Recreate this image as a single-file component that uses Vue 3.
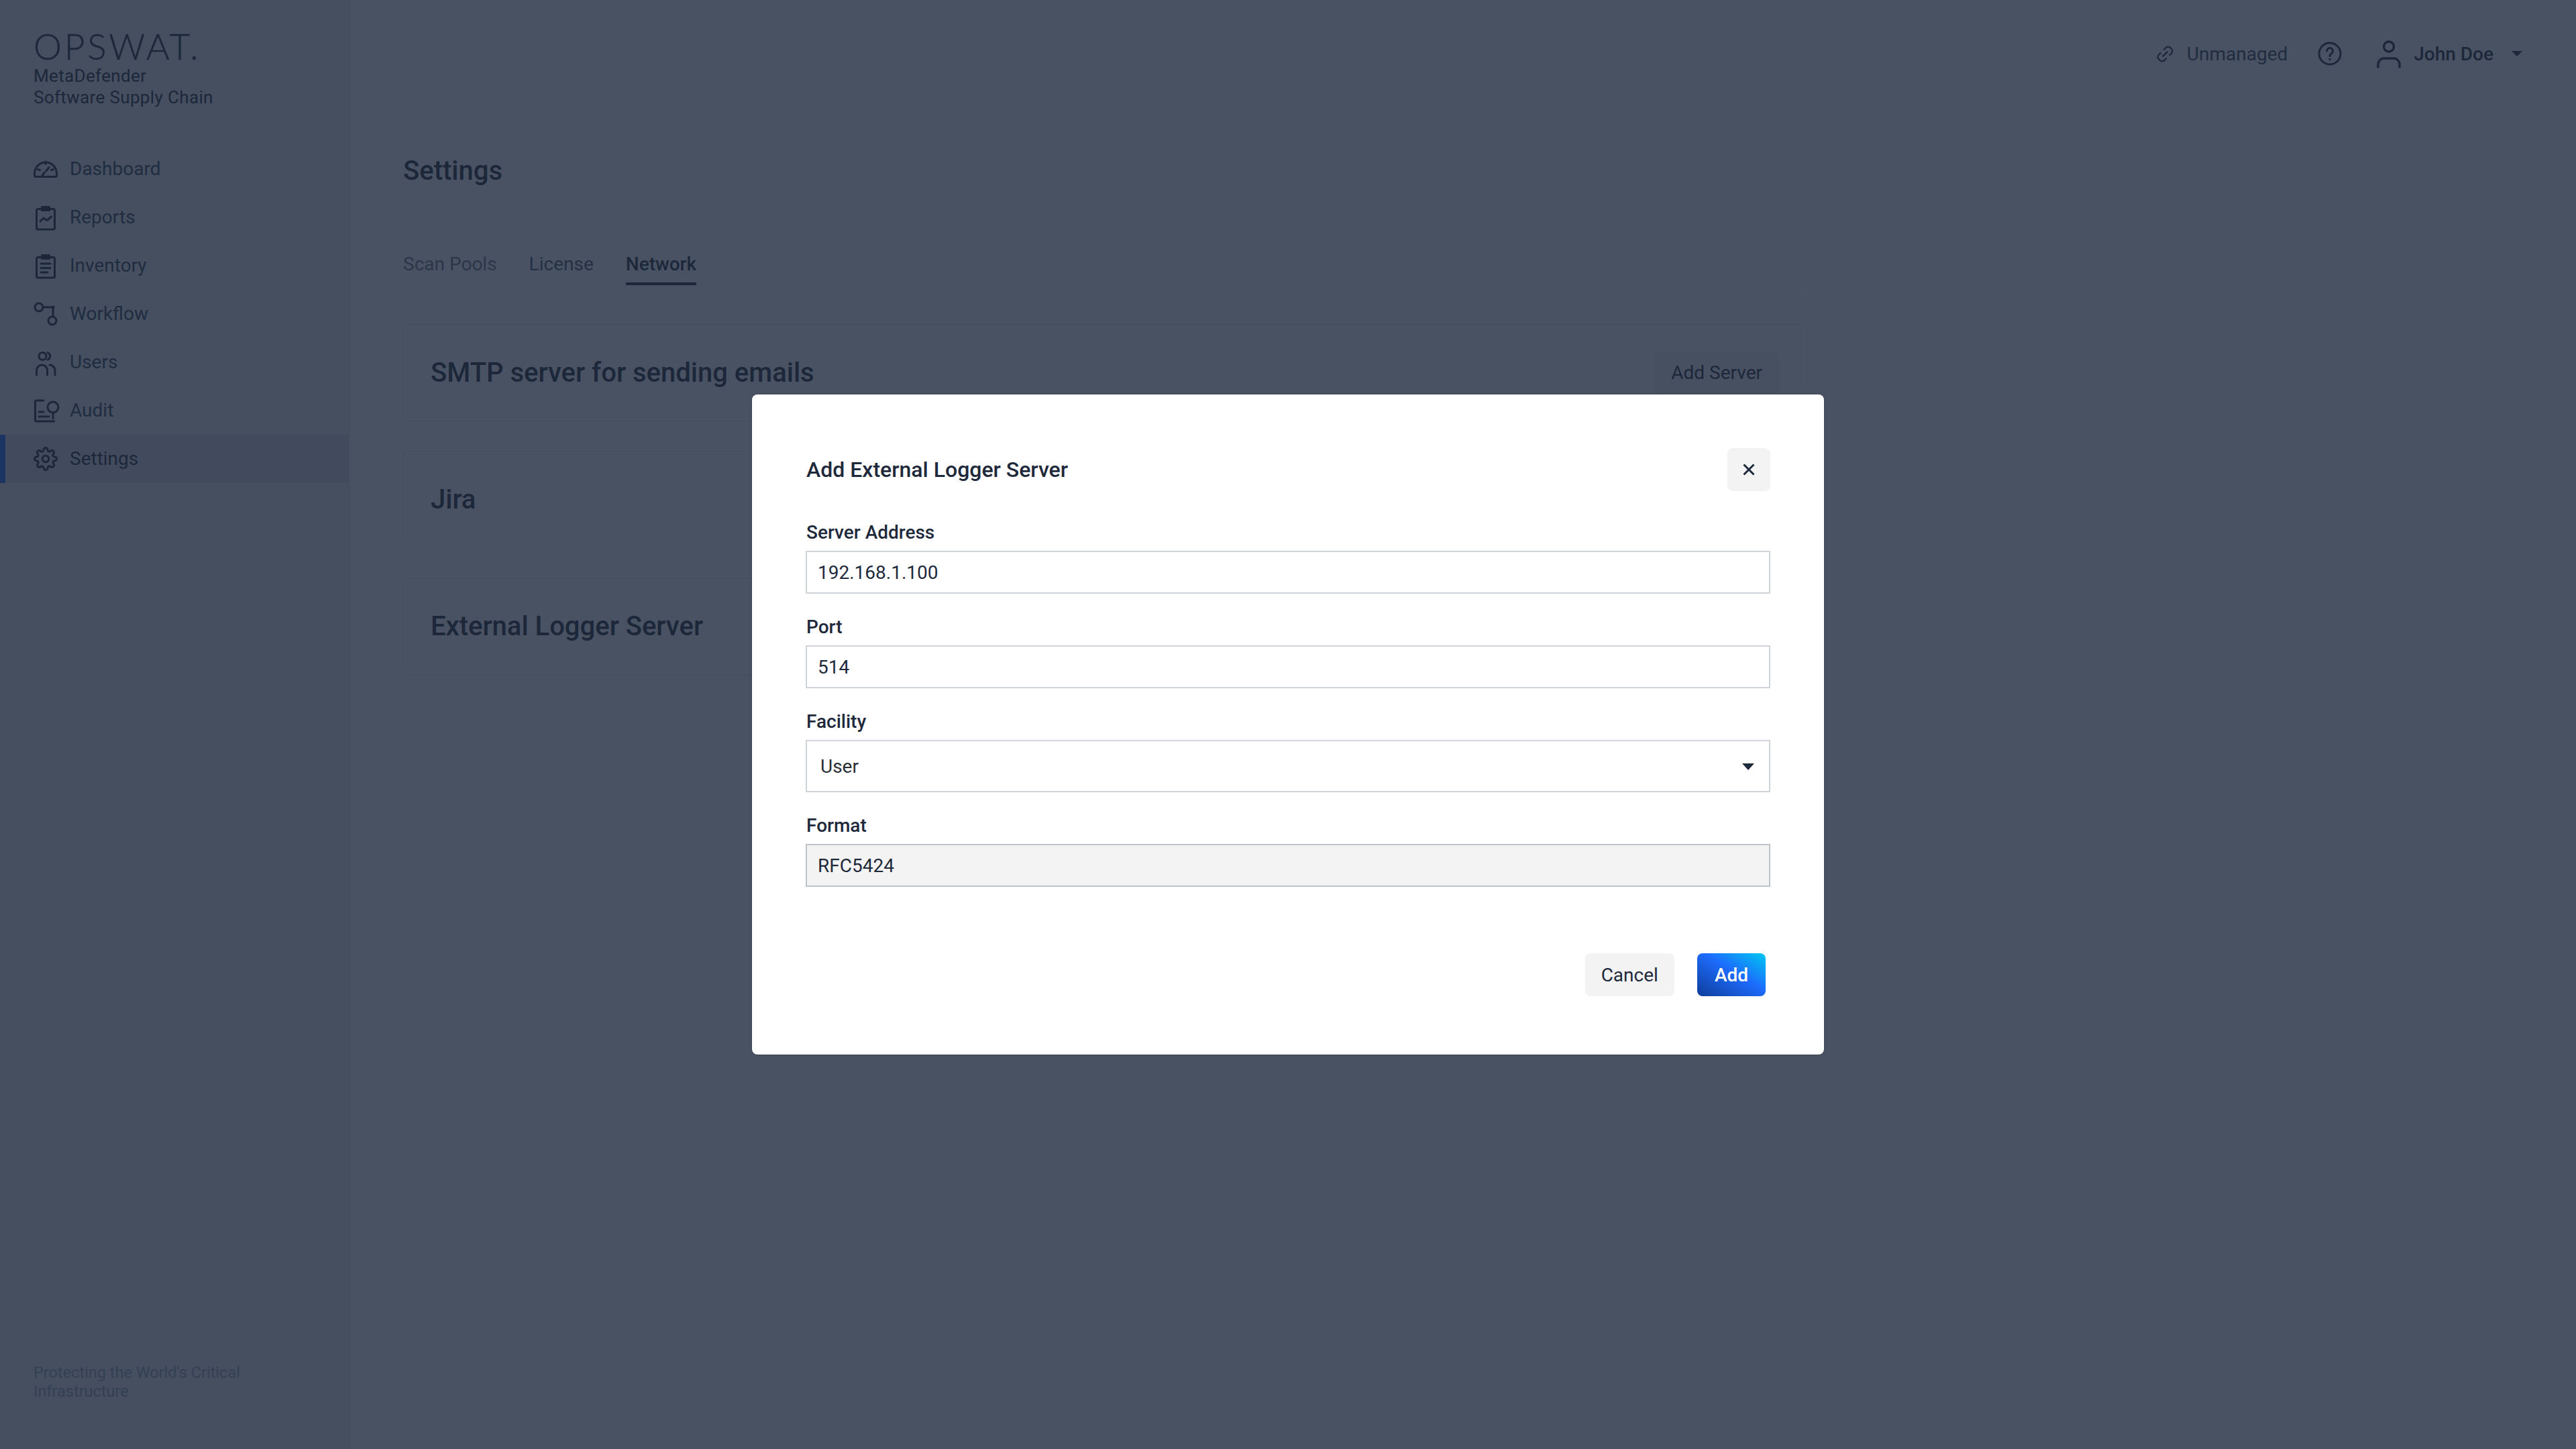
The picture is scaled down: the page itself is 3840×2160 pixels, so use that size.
<script setup>
const nav = [
  { label: 'Dashboard', paths: ['M3 29.5h30a1.5 1.5 0 0 0 1.5-1.5v-3.5A16.5 16.5 0 0 0 1.5 24.5V28A1.5 1.5 0 0 0 3 29.5z', 'M18 7v3.5', 'M6.5 18.5l3 1.2', 'M29.5 18.5l-3 1.2', 'M12.5 28.5l4-5.5', 'M19 20.5l4-5'] },
  { label: 'Reports', paths: ['M11 5.5H7a2.5 2.5 0 0 0-2.5 2.5v26a2 2 0 0 0 2 2h23a2 2 0 0 0 2-2V8a2.5 2.5 0 0 0-2.5-2.5h-4', 'M10 24l5-5 5 3.5 6.5-5.5'], fills: ['M11 3a2 2 0 0 1 2-2h10a2 2 0 0 1 2 2v6H11z'] },
  { label: 'Inventory', paths: ['M11 5.5H7a2.5 2.5 0 0 0-2.5 2.5v26a2 2 0 0 0 2 2h23a2 2 0 0 0 2-2V8a2.5 2.5 0 0 0-2.5-2.5h-4', 'M11 15h14', 'M11 21.5h14', 'M11 28h10'], fills: ['M11 3a2 2 0 0 1 2-2h10a2 2 0 0 1 2 2v6H11z'] },
  { label: 'Workflow', paths: ['M14 8a6 6 0 1 1-12 0a6 6 0 0 1 12 0z', 'M14 8h15', 'M29 8v14', 'M34 28a6 6 0 1 1-12 0a6 6 0 0 1 12 0z'], fills: ['M26.5 8a2.5 2.5 0 1 0 5 0a2.5 2.5 0 0 0-5 0z'] },
  { label: 'Users', paths: ['M19 9a5.5 5.5 0 1 1-11 0a5.5 5.5 0 0 1 11 0z', 'M21 3.8a5.5 5.5 0 0 1 0 10.4', 'M4.5 37v-7a8 8 0 0 1 16 0v7', 'M24 22a8 8 0 0 1 8 8v7'] },
  { label: 'Audit', paths: ['M15 3H4a1.5 1.5 0 0 0-1.5 1.5v28A1.5 1.5 0 0 0 4 34h26.5', 'M37 13a8 8 0 1 1-16 0a8 8 0 0 1 16 0z', 'M29 21v9', 'M8 20h7', 'M8 27h15'] },
  { label: 'Settings', active: true, gear: true }
]
const tabs = [
  { label: 'Scan Pools', tone: 'muted' },
  { label: 'License', tone: 'soft' },
  { label: 'Network', tone: 'active' }
]
const cards = [
  { title: 'SMTP server for sending emails', action: 'Add Server' },
  { title: 'Jira' },
  { title: 'External Logger Server' }
]
</script>

<template>
  <div class="page">
    <aside class="sidebar">
      <div class="brand">
        <div class="logo">OPSWAT.</div>
        <div class="product">MetaDefender<br />Software Supply Chain</div>
      </div>
      <nav class="nav">
        <a v-for="item in nav" :key="item.label" class="nav-item" :class="{ active: item.active }">
          <svg v-if="item.gear" class="nav-icon" viewBox="0 0 24 24" fill="none" stroke="currentColor" stroke-width="2">
            <circle cx="12" cy="12" r="3.2" />
            <path d="M19.4 15a1.65 1.65 0 0 0 .33 1.82l.06.06a2 2 0 0 1 0 2.83 2 2 0 0 1-2.83 0l-.06-.06a1.65 1.65 0 0 0-1.82-.33 1.65 1.65 0 0 0-1 1.51V21a2 2 0 0 1-2 2 2 2 0 0 1-2-2v-.09A1.65 1.65 0 0 0 9 19.4a1.65 1.65 0 0 0-1.82.33l-.06.06a2 2 0 0 1-2.83 0 2 2 0 0 1 0-2.83l.06-.06a1.65 1.65 0 0 0 .33-1.82 1.65 1.65 0 0 0-1.51-1H3a2 2 0 0 1-2-2 2 2 0 0 1 2-2h.09A1.65 1.65 0 0 0 4.6 9a1.65 1.65 0 0 0-.33-1.82l-.06-.06a2 2 0 0 1 0-2.83 2 2 0 0 1 2.83 0l.06.06a1.65 1.65 0 0 0 1.82.33H9a1.65 1.65 0 0 0 1-1.51V3a2 2 0 0 1 2-2 2 2 0 0 1 2 2v.09a1.65 1.65 0 0 0 1 1.51 1.65 1.65 0 0 0 1.82-.33l.06-.06a2 2 0 0 1 2.83 0 2 2 0 0 1 0 2.83l-.06.06a1.65 1.65 0 0 0-.33 1.82V9a1.65 1.65 0 0 0 1.51 1H21a2 2 0 0 1 2 2 2 2 0 0 1-2 2h-.09a1.65 1.65 0 0 0-1.51 1z" />
          </svg>
          <svg v-else class="nav-icon" viewBox="0 0 36 36" fill="none" stroke="currentColor" stroke-width="3" stroke-linecap="round" stroke-linejoin="round">
            <path v-for="d in item.paths" :key="d" :d="d" />
            <path v-for="d in item.fills || []" :key="d" :d="d" fill="currentColor" stroke="none" />
          </svg>
          <span class="nav-label">{{ item.label }}</span>
        </a>
      </nav>
      <p class="tagline">Protecting the World's Critical Infrastructure</p>
    </aside>

    <div class="main">
      <header class="topbar">
        <div class="status">
          <svg class="link-icon" viewBox="0 0 24 24" fill="none" stroke="currentColor" stroke-width="2.2" stroke-linecap="round">
            <path d="M10.5 5.5l2.5-2.5a4.6 4.6 0 0 1 6.5 0l1.5 1.5a4.6 4.6 0 0 1 0 6.5l-2.5 2.5" />
            <path d="M13.5 18.5l-2.5 2.5a4.6 4.6 0 0 1-6.5 0l-1.5-1.5a4.6 4.6 0 0 1 0-6.5l2.5-2.5" />
            <path d="M9 15l6-6" />
          </svg>
          <span>Unmanaged</span>
        </div>
        <svg class="help-icon" viewBox="0 0 36 36" fill="none" stroke="currentColor" stroke-width="3" stroke-linecap="round">
          <circle cx="18" cy="18" r="16" />
          <path d="M13.5 14a4.5 4.5 0 1 1 7 3.8c-1.6 1-2.5 1.9-2.5 3.7" />
          <circle cx="18" cy="26.5" r="1.8" fill="currentColor" stroke="none" />
        </svg>
        <div class="user">
          <svg class="user-icon" viewBox="0 0 36 40" fill="none" stroke="currentColor" stroke-width="3.4" stroke-linecap="round">
            <circle cx="18" cy="9.5" r="7.5" />
            <path d="M2 40v-4a9 9 0 0 1 9-9h14a9 9 0 0 1 9 9v4" />
          </svg>
          <span class="user-name">John Doe</span>
          <span class="user-caret"></span>
        </div>
      </header>

      <main class="content">
        <h1 class="title">Settings</h1>
        <div class="tabs">
          <span v-for="tab in tabs" :key="tab.label" class="tab" :class="tab.tone">{{ tab.label }}</span>
        </div>
        <section v-for="card in cards" :key="card.title" class="card">
          <h2 class="card-title">{{ card.title }}</h2>
          <span v-if="card.action" class="ghost-btn">{{ card.action }}</span>
        </section>
      </main>
    </div>

    <div class="overlay">
      <div class="modal" role="dialog">
        <div class="modal-head">
          <h3 class="modal-title">Add External Logger Server</h3>
          <button class="close" type="button" aria-label="Close">
            <svg viewBox="0 0 18 18" fill="none" stroke="currentColor" stroke-width="3">
              <path d="M1.5 1.5l15 15M16.5 1.5l-15 15" />
            </svg>
          </button>
        </div>
        <div class="field">
          <label class="label">Server Address</label>
          <div class="input">192.168.1.100</div>
        </div>
        <div class="field">
          <label class="label">Port</label>
          <div class="input">514</div>
        </div>
        <div class="field">
          <label class="label">Facility</label>
          <div class="select">
            <span>User</span>
            <span class="select-caret"></span>
          </div>
        </div>
        <div class="field">
          <label class="label">Format</label>
          <div class="input disabled">RFC5424</div>
        </div>
        <div class="actions">
          <button class="btn cancel" type="button">Cancel</button>
          <button class="btn primary" type="button">Add</button>
        </div>
      </div>
    </div>
  </div>
</template>

<style>
html, body { margin: 0; padding: 0; background: #fff; }
</style>

<style scoped>
* { box-sizing: border-box; }
.page {
  position: relative;
  display: flex;
  width: 3840px;
  height: 2160px;
  overflow: hidden;
  background: #fff;
  color: #1e293b;
  font-family: Roboto, "Liberation Sans", sans-serif;
  font-size: 28px;
}
.sidebar {
  display: flex;
  flex-direction: column;
  width: 521px;
  flex: none;
  background: #ebeef1;
  border-right: 1px solid #e4e7ea;
}
.brand { padding: 40px 50px 0; height: 216px; }
.logo {
  height: 58px;
  font-family: Lato, Roboto, sans-serif;
  font-weight: 300;
  font-size: 53px;
  line-height: 58px;
  letter-spacing: 3.8px;
  white-space: nowrap;
  color: #1e293b;
  -webkit-text-stroke: .5px #1e293b;
}
.product {
  margin-top: -1px;
  font-size: 26px;
  line-height: 32px;
  letter-spacing: .35px;
  color: #1e293b;
}
.nav { display: flex; flex-direction: column; }
.nav-item {
  display: flex;
  align-items: center;
  gap: 18px;
  height: 72px;
  width: 520px;
  padding-left: 50px;
  color: #334155;
}
.nav-label { margin-bottom: 2px; }
.nav-item.active {
  background: #d9dde3;
  box-shadow: inset 8px 0 0 #1d6bfc;
  color: #1e293b;
}
.nav-icon { width: 36px; height: 36px; flex: none; overflow: visible; color: #1e293b; }
.tagline {
  margin: auto 0 72px;
  padding: 0 50px;
  width: 470px;
  font-size: 23.5px;
  line-height: 28px;
  color: #94a3b8;
}
.main { flex: 1; min-width: 0; }
.topbar {
  display: flex;
  align-items: center;
  justify-content: flex-end;
  height: 160px;
  padding: 0 80px;
}
.status { display: flex; align-items: center; gap: 20px; color: #334155; }
.link-icon { width: 25px; height: 25px; color: #1e293b; }
.help-icon { width: 36px; height: 36px; margin-left: 45px; color: #1e293b; }
.user { display: flex; align-items: center; margin-left: 52px; }
.user-icon { width: 36px; height: 40px; overflow: visible; color: #1e293b; }
.user-name { margin-left: 19px; font-weight: 500; }
.user-caret {
  margin-left: 27px;
  border-left: 8px solid transparent;
  border-right: 8px solid transparent;
  border-top: 8px solid #1e293b;
}
.content { padding: 71px 0 0 80px; width: 2172px; }
.title { margin: 0; font-size: 40px; line-height: 48px; font-weight: 500; }
.tabs {
  display: flex;
  gap: 48px;
  margin-top: 97px;
  margin-bottom: 57px;
  border-bottom: 1px solid #e8eaed;
}
.tab { height: 49px; line-height: 36px; }
.tab.muted { color: #6b7280; }
.tab.soft { color: #475569; }
.tab.active { color: #1e293b; font-weight: 500; box-shadow: inset 0 -4px 0 #1e293b; }
.card {
  display: flex;
  align-items: center;
  justify-content: space-between;
  height: 145px;
  margin-bottom: 44px;
  padding: 0 39px 0 40px;
  border: 1px solid #e8eaed;
  border-radius: 4px;
}
.card-title { margin: 0; font-size: 40px; line-height: 48px; font-weight: 500; }
.ghost-btn {
  padding: 14px 26px;
  line-height: 36px;
  border-radius: 8px;
  background: #f3f3f3;
}
.overlay {
  position: absolute;
  inset: 0;
  display: flex;
  align-items: center;
  justify-content: center;
  background: rgba(28, 39, 59, .8);
}
.modal {
  width: 1598px;
  height: 984px;
  padding: 80px 80px 87px;
  background: #fff;
  border-radius: 8px;
  box-shadow: 0 0 3px rgba(0, 0, 0, .3);
}
.modal-head {
  display: flex;
  align-items: center;
  justify-content: space-between;
  height: 64px;
  margin-bottom: 43px;
}
.modal-title { margin: 0 0 0 1px; font-size: 32px; line-height: 40px; font-weight: 500; }
.close {
  display: flex;
  align-items: center;
  justify-content: center;
  width: 64px;
  height: 64px;
  padding: 0;
  border: 0;
  border-radius: 8px;
  background: #f3f3f3;
  color: #1e293b;
}
.close svg { width: 18px; height: 18px; }
.field { margin-bottom: 31px; }
.label {
  display: block;
  margin: 0 0 9px 1px;
  padding-top: 1px;
  line-height: 36px;
  font-weight: 500;
}
.input, .select {
  display: flex;
  align-items: center;
  height: 64px;
  padding: 2px 16px 0;
  border: 2px solid #d1d5db;
  background: #fff;
  line-height: 36px;
}
.select {
  justify-content: space-between;
  height: 78px;
  padding: 2px 22px 0 20px;
  color: #2b2f36;
}
.select-caret {
  border-left: 9px solid transparent;
  border-right: 9px solid transparent;
  border-top: 10px solid #1e293b;
}
.input.disabled { background: #f3f3f3; border-color: #bfc4ca; }
.actions {
  display: flex;
  justify-content: flex-end;
  gap: 34px;
  margin-top: 99px;
  padding-right: 7px;
}
.btn {
  height: 64px;
  padding: 1px 24px 0;
  border: 0;
  border-radius: 8px;
  font-family: inherit;
  font-size: 28px;
  line-height: 36px;
}
.cancel { background: #f3f3f3; color: #1e293b; }
.primary {
  padding: 1px 26px 0;
  color: #fff;
  font-weight: 500;
  background: linear-gradient(to top right, #0f3d9a 0%, #1d6bfc 55%, #00c8f0 100%);
}
</style>
